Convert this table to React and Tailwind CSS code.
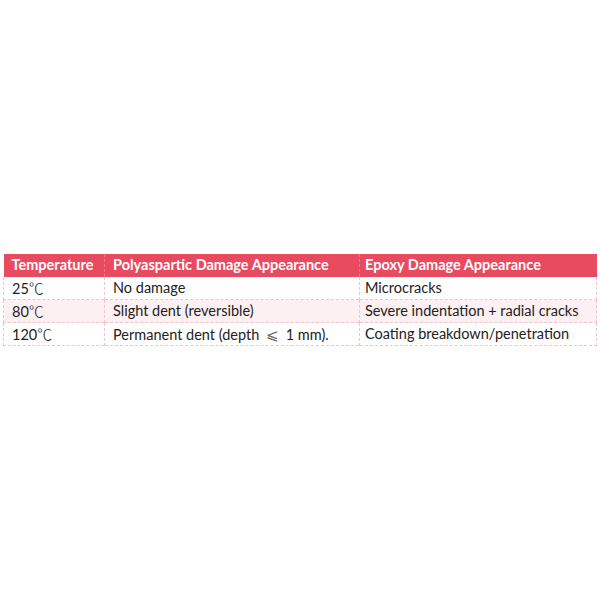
import React from 'react'

const cjk = "font-['Noto_Sans_CJK_SC',sans-serif]"

const Deg = ({ n }) => (
  <>
    {n}
    <span className={`${cjk} text-[15px] font-light`}>℃</span>
  </>
)

const rows = [
  { t: <Deg n="25" />, p: 'No damage', e: 'Microcracks', bg: 'bg-white' },
  { t: <Deg n="80" />, p: 'Slight dent (reversible)', e: 'Severe indentation + radial cracks', bg: 'bg-[#fdf0f2]' },
  {
    t: <Deg n="120" />,
    p: (
      <>
        Permanent dent (depth <span className={`${cjk} text-[#666] mx-[3px]`}>⩽</span> 1 mm).
      </>
    ),
    e: 'Coating breakdown/penetration',
    bg: 'bg-white',
  },
]

export default function App() {
  return (
    <div className="w-[600px] h-[600px] bg-white flex items-center justify-center font-['Lato','Noto_Sans_CJK_SC',sans-serif] text-[14.5px] text-[#222]">
      <table className="w-[593px] border-collapse table-fixed">
        <colgroup>
          <col className="w-[101px]" />
          <col className="w-[255px]" />
          <col className="w-[237px]" />
        </colgroup>
        <thead>
          <tr className="bg-[#e84a5f] text-white font-bold h-[23px]">
            <th className="text-left px-[8px] border-r border-dashed border-[#f07a88]">Temperature</th>
            <th className="text-left px-[8px] border-r border-dashed border-[#f07a88]">Polyaspartic Damage Appearance</th>
            <th className="text-left px-[5px]">Epoxy Damage Appearance</th>
          </tr>
        </thead>
        <tbody>
          {rows.map((r, i) => (
            <tr key={i} className={`${r.bg} h-[23px] border-b border-dashed border-[#f3c3ca] border-x border-x-[#f3c3ca]`}>
              <td className="px-[8px] border-r border-dashed border-[#f3c3ca] leading-[20px]">{r.t}</td>
              <td className="px-[8px] border-r border-dashed border-[#f3c3ca] leading-[20px]">{r.p}</td>
              <td className="px-[5px] leading-[20px]">{r.e}</td>
            </tr>
          ))}
        </tbody>
      </table>
    </div>
  )
}
